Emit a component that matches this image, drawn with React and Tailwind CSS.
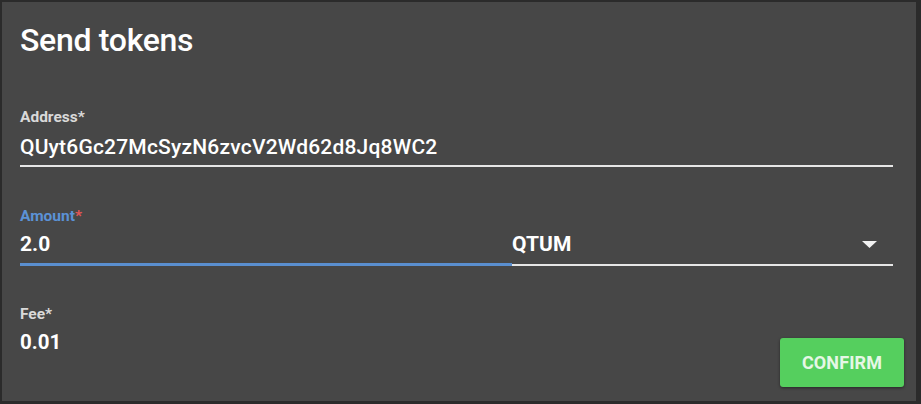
export default function App() {
  return (
    <div className="w-[921px] h-[404px] bg-[#2b2b2b] pt-[2px] pl-[2px] pr-[5px] pb-[3px]" style={{ fontFamily: "Roboto, 'Liberation Sans', sans-serif" }}>
      <div className="h-full bg-[#474747] pl-[18px] pr-[23px] pt-[18px] flex flex-col">
        <h1 className="text-[32px] leading-[40px] font-medium text-white tracking-[-0.3px]">Send tokens</h1>

        <div className="mt-[48px]">
          <div className="text-[15.5px] leading-[18px] font-bold text-[#d9d9d9]">Address*</div>
          <div className="mt-[8px] text-[21px] leading-[26px] font-medium text-white tracking-[0.2px]">QUyt6Gc27McSyzN6zvcV2Wd62d8Jq8WC2</div>
          <div className="mt-[5px] h-[2px] bg-[#e6e6e6]" />
        </div>

        <div className="mt-[40px] flex">
          <div className="w-[492px]">
            <div className="text-[15.5px] leading-[18px] font-bold text-[#5b92d6]">
              Amount<span className="text-[#e25656]">*</span>
            </div>
            <div className="mt-[6px] text-[21px] leading-[26px] font-bold text-white">2.0</div>
            <div className="mt-[6px] h-[3px] bg-[#5a8fd0]" />
          </div>
          <div className="flex-1 flex flex-col justify-end">
            <div className="flex items-center justify-between pr-[16px]">
              <span className="text-[21px] leading-[26px] font-bold text-white">QTUM</span>
              <svg width="15" height="7" viewBox="0 0 15 7">
                <polygon points="0,0 15,0 7.5,7" fill="#f2f2f2" />
              </svg>
            </div>
            <div className="mt-[7px] h-[2px] bg-[#e6e6e6]" />
          </div>
        </div>

        <div className="mt-[39px] flex items-start justify-between">
          <div>
            <div className="text-[15.5px] leading-[18px] font-bold text-[#d9d9d9]">Fee*</div>
            <div className="mt-[6px] text-[20.5px] leading-[26px] font-bold text-white">0.01</div>
          </div>
          <button className="mt-[33px] mr-[-11px] w-[124px] h-[49px] rounded-[3px] bg-[#55cf5e] text-[#e6f7e6] text-[18px] font-bold tracking-[0.1px] shadow-[0_1px_3px_rgba(0,0,0,0.45)]">
            CONFIRM
          </button>
        </div>
      </div>
    </div>
  );
}
